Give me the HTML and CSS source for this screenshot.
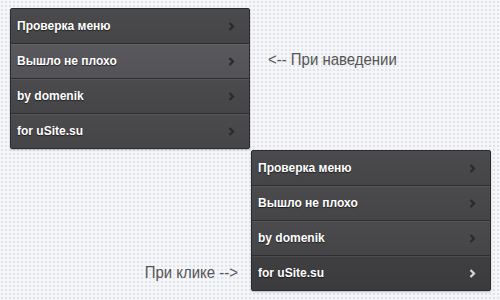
FILE: index.html
```html
<!DOCTYPE html>
<html>
	<head>
		<meta charset="UTF-8">
		<title>Меню</title>
		<link rel="stylesheet" href="styles.css">
	</head>
	<body>
		<div class="line first">
			<ul class="menu">
				<li><a href="#">Проверка меню<svg width="7" height="9" viewBox="0 0 7 9"><polyline points="1.5,1 5,4.5 1.5,8"/></svg></a></li>
				<li class="hover"><a href="#">Вышло не плохо<svg width="7" height="9" viewBox="0 0 7 9"><polyline points="1.5,1 5,4.5 1.5,8"/></svg></a></li>
				<li><a href="#">by domenik<svg width="7" height="9" viewBox="0 0 7 9"><polyline points="1.5,1 5,4.5 1.5,8"/></svg></a></li>
				<li><a href="#">for uSite.su<svg width="7" height="9" viewBox="0 0 7 9"><polyline points="1.5,1 5,4.5 1.5,8"/></svg></a></li>
			</ul>
			<span class="note">&lt;-- При наведении</span>
		</div>
		<div class="line second">
			<span class="note">При клике --&gt;</span>
			<ul class="menu">
				<li><a href="#">Проверка меню<svg width="7" height="9" viewBox="0 0 7 9"><polyline points="1.5,1 5,4.5 1.5,8"/></svg></a></li>
				<li><a href="#">Вышло не плохо<svg width="7" height="9" viewBox="0 0 7 9"><polyline points="1.5,1 5,4.5 1.5,8"/></svg></a></li>
				<li><a href="#">by domenik<svg width="7" height="9" viewBox="0 0 7 9"><polyline points="1.5,1 5,4.5 1.5,8"/></svg></a></li>
				<li class="active"><a href="#">for uSite.su<svg width="7" height="9" viewBox="0 0 7 9"><polyline points="1.5,1 5,4.5 1.5,8"/></svg></a></li>
			</ul>
		</div>
	</body>
</html>
```

FILE: styles.css
```css
*{
	margin: 0;
	padding: 0;
}
body{
	width: 500px;
	height: 300px;
	overflow: hidden;
	background-color: #f5f6f8;
	background-image: radial-gradient(circle, #dfe2ea 0.8px, transparent 1.2px);
	background-size: 4px 4px;
	font-family: "Liberation Sans", Arial, sans-serif;
}
.line{
	display: flex;
	align-items: center;
}
.first{
	padding: 8px 0 0 10px;
}
.second{
	padding: 1px 9px 0 0;
	justify-content: flex-end;
}
.menu{
	list-style: none;
	width: 238px;
	border: 1px solid #2b2b2d;
	border-radius: 2px;
	background: #49484b;
	box-shadow: 0 1px 2px rgba(0,0,0,0.25);
	overflow: hidden;
}
.menu li{
	border-top: 1px solid #2d2c2f;
	box-shadow: inset 0 1px 0 rgba(255,255,255,0.07);
	background: linear-gradient(#4b4a4d, #454447);
}
.menu li:first-child{
	border-top: none;
	box-shadow: none;
}
.menu a{
	display: flex;
	justify-content: space-between;
	align-items: center;
	height: 34px;
	padding: 0 14px 0 6px;
	color: #fff;
	font-size: 12px;
	font-weight: bold;
	text-decoration: none;
	text-shadow: 0 1px 1px rgba(0,0,0,0.6);
}
.menu svg polyline{
	fill: none;
	stroke: #2a2a2c;
	stroke-width: 2.2;
}
.menu li.hover{
	background: linear-gradient(#59585c, #535256);
}
.menu li.active{
	background: linear-gradient(#3f3e41, #3b3a3d);
}
.menu li.active svg polyline{
	stroke: #d8d8d8;
}
.note{
	color: #555;
	font-size: 17px;
	transform: scaleX(0.88);
}
.first .note{
	margin-left: 18px;
	margin-top: -38px;
	transform-origin: left center;
}
.second .note{
	margin-right: 13px;
	margin-top: 105px;
	transform-origin: right center;
}
```
